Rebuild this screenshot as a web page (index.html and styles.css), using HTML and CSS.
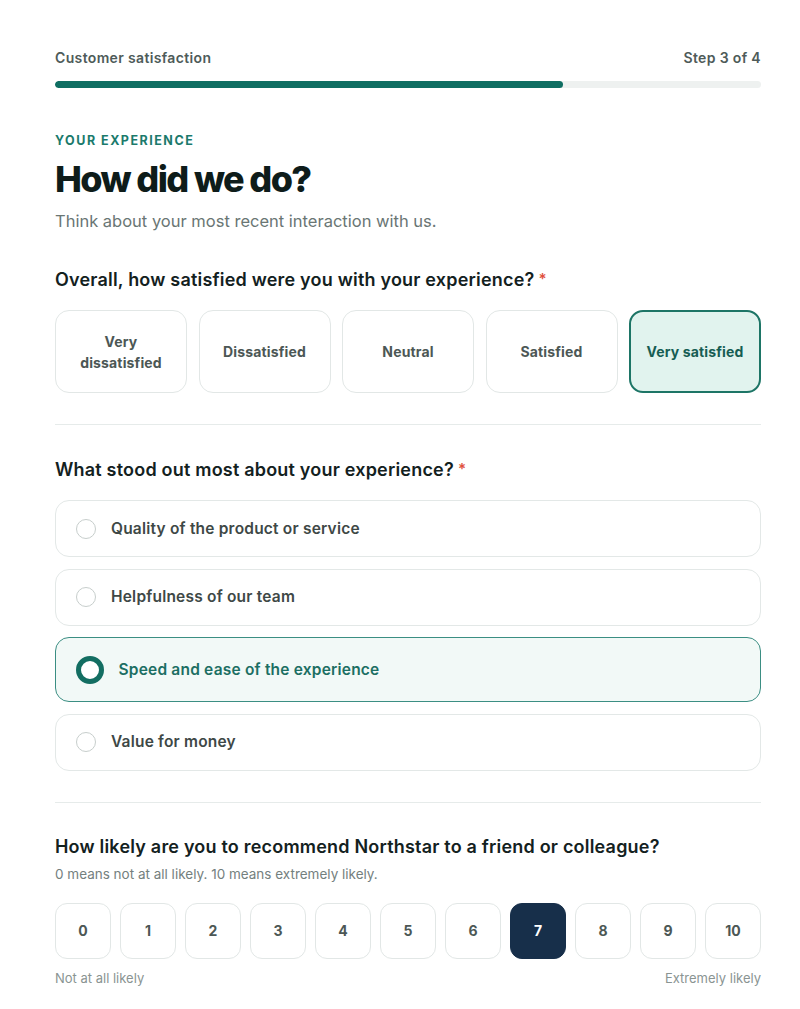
FILE: index.html
```html
<!DOCTYPE html>
<html lang="en">
<head>
<meta charset="utf-8">
<title>Customer satisfaction</title>
<link rel="stylesheet" href="styles.css">
</head>
<body>
<main class="survey">
  <header class="progress-head">
    <div class="progress-labels">
      <span class="progress-title">Customer satisfaction</span>
      <span class="progress-step">Step 3 of 4</span>
    </div>
    <div class="progress-track"><div class="progress-fill" style="width:72%"></div></div>
  </header>

  <section class="intro">
    <div class="eyebrow">YOUR EXPERIENCE</div>
    <h1 class="title">How did we do?</h1>
    <p class="subtitle">Think about your most recent interaction with us.</p>
  </section>

  <section class="question">
    <h2 class="q-title">Overall, how satisfied were you with your experience?<span class="req">*</span></h2>
    <div class="scale5">
      <button class="choice">Very<br>dissatisfied</button>
      <button class="choice">Dissatisfied</button>
      <button class="choice">Neutral</button>
      <button class="choice">Satisfied</button>
      <button class="choice selected">Very satisfied</button>
    </div>
  </section>

  <hr class="divider">

  <section class="question">
    <h2 class="q-title">What stood out most about your experience?<span class="req">*</span></h2>
    <div class="options">
      <label class="option"><span class="radio"></span><span class="opt-text">Quality of the product or service</span></label>
      <label class="option"><span class="radio"></span><span class="opt-text">Helpfulness of our team</span></label>
      <label class="option selected"><span class="radio"></span><span class="opt-text">Speed and ease of the experience</span></label>
      <label class="option"><span class="radio"></span><span class="opt-text">Value for money</span></label>
    </div>
  </section>

  <hr class="divider">

  <section class="question">
    <h2 class="q-title">How likely are you to recommend Northstar to a friend or colleague?</h2>
    <p class="helper">0 means not at all likely. 10 means extremely likely.</p>
    <div class="nps">
      <button class="num">0</button>
      <button class="num">1</button>
      <button class="num">2</button>
      <button class="num">3</button>
      <button class="num">4</button>
      <button class="num">5</button>
      <button class="num">6</button>
      <button class="num selected">7</button>
      <button class="num">8</button>
      <button class="num">9</button>
      <button class="num">10</button>
    </div>
    <div class="nps-labels">
      <span>Not at all likely</span>
      <span>Extremely likely</span>
    </div>
  </section>
</main>
</body>
</html>
```

FILE: styles.css
```css
* { box-sizing: border-box; }
html, body { margin: 0; padding: 0; background: #ffffff; }
body {
  font-family: Inter, "Noto Sans", "Liberation Sans", sans-serif;
  color: #13211e;
}
.survey {
  width: 706px;
  margin-left: 55px;
  padding-top: 48px;
}
.progress-labels {
  display: flex;
  justify-content: space-between;
  font-size: 14px;
  line-height: 20px;
  font-weight: 600;
  letter-spacing: 0.35px;
  color: #4e5b59;
}
.progress-track {
  margin-top: 13px;
  height: 7px;
  border-radius: 4px;
  background: #eef1f0;
  overflow: hidden;
}
.progress-fill {
  height: 100%;
  background: #0f6e62;
  border-radius: 4px;
}
.intro { margin-top: 45px; }
.eyebrow {
  font-size: 12.5px;
  line-height: 16px;
  font-weight: 700;
  letter-spacing: 1.5px;
  color: #1b7a6c;
}
.title {
  margin: 8px 0 0;
  font-size: 36px;
  line-height: 44px;
  font-weight: 800;
  letter-spacing: -1.6px;
  color: #0e1c1a;
}
.subtitle {
  margin: 9px 0 0;
  font-size: 16.5px;
  line-height: 22px;
  color: #6a7674;
}
.intro + .question { margin-top: 36px; }
.q-title {
  margin: 0;
  font-size: 18px;
  line-height: 22px;
  font-weight: 600;
  letter-spacing: 0.2px;
  color: #13211e;
}
.req { color: #e0503c; margin-left: 4px; font-size: 15px; vertical-align: 2px; }
.scale5 {
  margin-top: 19px;
  display: grid;
  grid-template-columns: repeat(5, 1fr);
  gap: 11.5px;
}
.choice {
  height: 83px;
  border: 1px solid #e2e7e6;
  border-radius: 14px;
  background: #fff;
  font-family: inherit;
  font-size: 14px;
  line-height: 21px;
  font-weight: 700;
  letter-spacing: 0.15px;
  color: #4c5755;
  padding: 0 8px;
}
.choice.selected {
  background: #e1f3ee;
  border: 2px solid #1d7566;
  color: #165d53;
}
.divider {
  border: 0;
  border-top: 1px solid #e6ebea;
  margin: 31px 0 33px;
}
.options {
  margin-top: 19px;
  display: flex;
  flex-direction: column;
  gap: 11.5px;
}
.option {
  display: flex;
  align-items: center;
  gap: 15px;
  padding: 17.5px 20px;
  border: 1px solid #e3e8e7;
  border-radius: 14px;
  background: #fff;
  font-size: 15.5px;
  line-height: 20px;
  font-weight: 600;
  letter-spacing: 0.2px;
  color: #3e4846;
}
.radio {
  flex: none;
  width: 20px;
  height: 20px;
  border-radius: 50%;
  border: 1.5px solid #c7cecc;
  background: #fff;
}
.option.selected {
  background: #f2f9f7;
  border: 1.5px solid #3b8e83;
  padding: 17.5px 20px 17.5px 19.5px;
}
.option.selected .radio {
  width: 28px;
  height: 28px;
  border: 5.5px solid #136e62;
}
.option.selected .opt-text { color: #1c6f63; }
.helper {
  margin: 8px 0 0;
  font-size: 13.5px;
  line-height: 16px;
  color: #74807e;
}
.nps {
  margin-top: 21px;
  display: grid;
  grid-template-columns: repeat(11, 56px);
  gap: 9px;
}
.num {
  height: 56px;
  border: 1px solid #e2e7e6;
  border-radius: 12px;
  background: #fff;
  font-family: inherit;
  font-size: 14px;
  font-weight: 700;
  color: #4c5755;
  padding: 0;
}
.num.selected {
  background: #172f4a;
  border-color: #172f4a;
  color: #ffffff;
}
.nps-labels {
  margin-top: 11px;
  display: flex;
  justify-content: space-between;
  font-size: 13px;
  line-height: 16px;
  color: #8a9492;
}
```
